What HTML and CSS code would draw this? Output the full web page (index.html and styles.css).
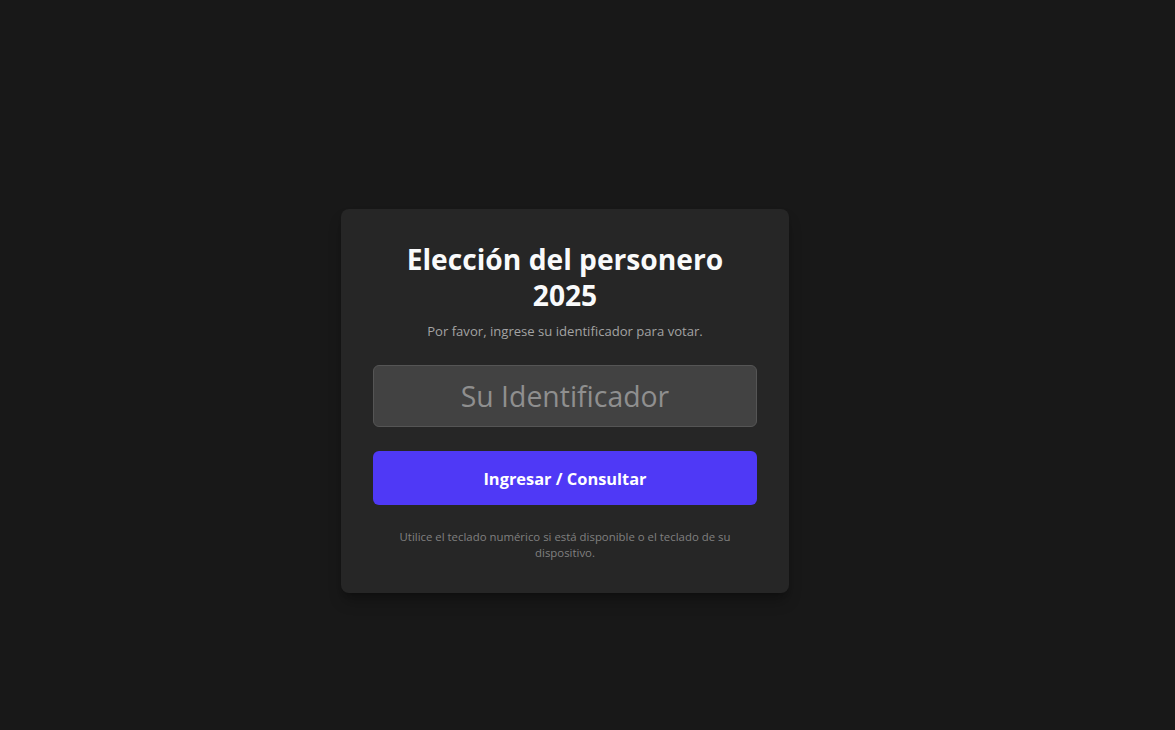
FILE: index.html
```html
<!DOCTYPE html>
<html lang="es">
<head>
<meta charset="utf-8">
<title>Elección del personero 2025</title>
<link rel="stylesheet" href="styles.css">
</head>
<body>
<main class="page">
  <section class="card">
    <h1 class="title">Elección del personero 2025</h1>
    <p class="subtitle">Por favor, ingrese su identificador para votar.</p>
    <form class="form">
      <input class="id-input" type="text" placeholder="Su Identificador">
      <button class="submit" type="button">Ingresar / Consultar</button>
    </form>
    <p class="hint">Utilice el teclado numérico si está disponible o el teclado de su dispositivo.</p>
  </section>
</main>
</body>
</html>
```
FILE: styles.css
```css
* { box-sizing: border-box; }
html, body { margin: 0; padding: 0; }
body {
  background: #181818;
  font-family: "Open Sans", "Noto Sans", sans-serif;
  color: #f3f4f6;
}
.page {
  min-height: 730px;
  display: flex;
  align-items: center;
  justify-content: center;
  padding: 72px 45px 0 0;
}
.card {
  width: 448px;
  background: #262626;
  border-radius: 8px;
  padding: 32px;
  text-align: center;
  box-shadow: 0 10px 15px -3px rgba(0,0,0,0.3), 0 4px 6px -4px rgba(0,0,0,0.3);
}
.title {
  margin: 0 auto;
  width: 330px;
  font-size: 28.2px;
  line-height: 36px;
  font-weight: 700;
  color: #f9fafb;
}
.subtitle {
  margin: 8px 0 0;
  font-size: 13.1px;
  line-height: 20px;
  color: #a3a3a3;
}
.form {
  margin-top: 24px;
  display: flex;
  flex-direction: column;
  gap: 24px;
}
.id-input {
  height: 62px;
  width: 100%;
  background: #424242;
  border: 1px solid #555555;
  border-radius: 6px;
  font-family: inherit;
  font-size: 28.4px;
  color: #e5e5e5;
  text-align: center;
  outline: none;
}
.id-input::placeholder { color: #8f8f8f; }
.submit {
  height: 54px;
  width: 100%;
  background: #4f39f6;
  border: none;
  border-radius: 6px;
  font-family: inherit;
  font-size: 16.4px;
  font-weight: 700;
  color: #ffffff;
}
.hint {
  margin: 24px auto 0;
  width: 350px;
  font-size: 11.4px;
  line-height: 16px;
  color: #808080;
}
```
